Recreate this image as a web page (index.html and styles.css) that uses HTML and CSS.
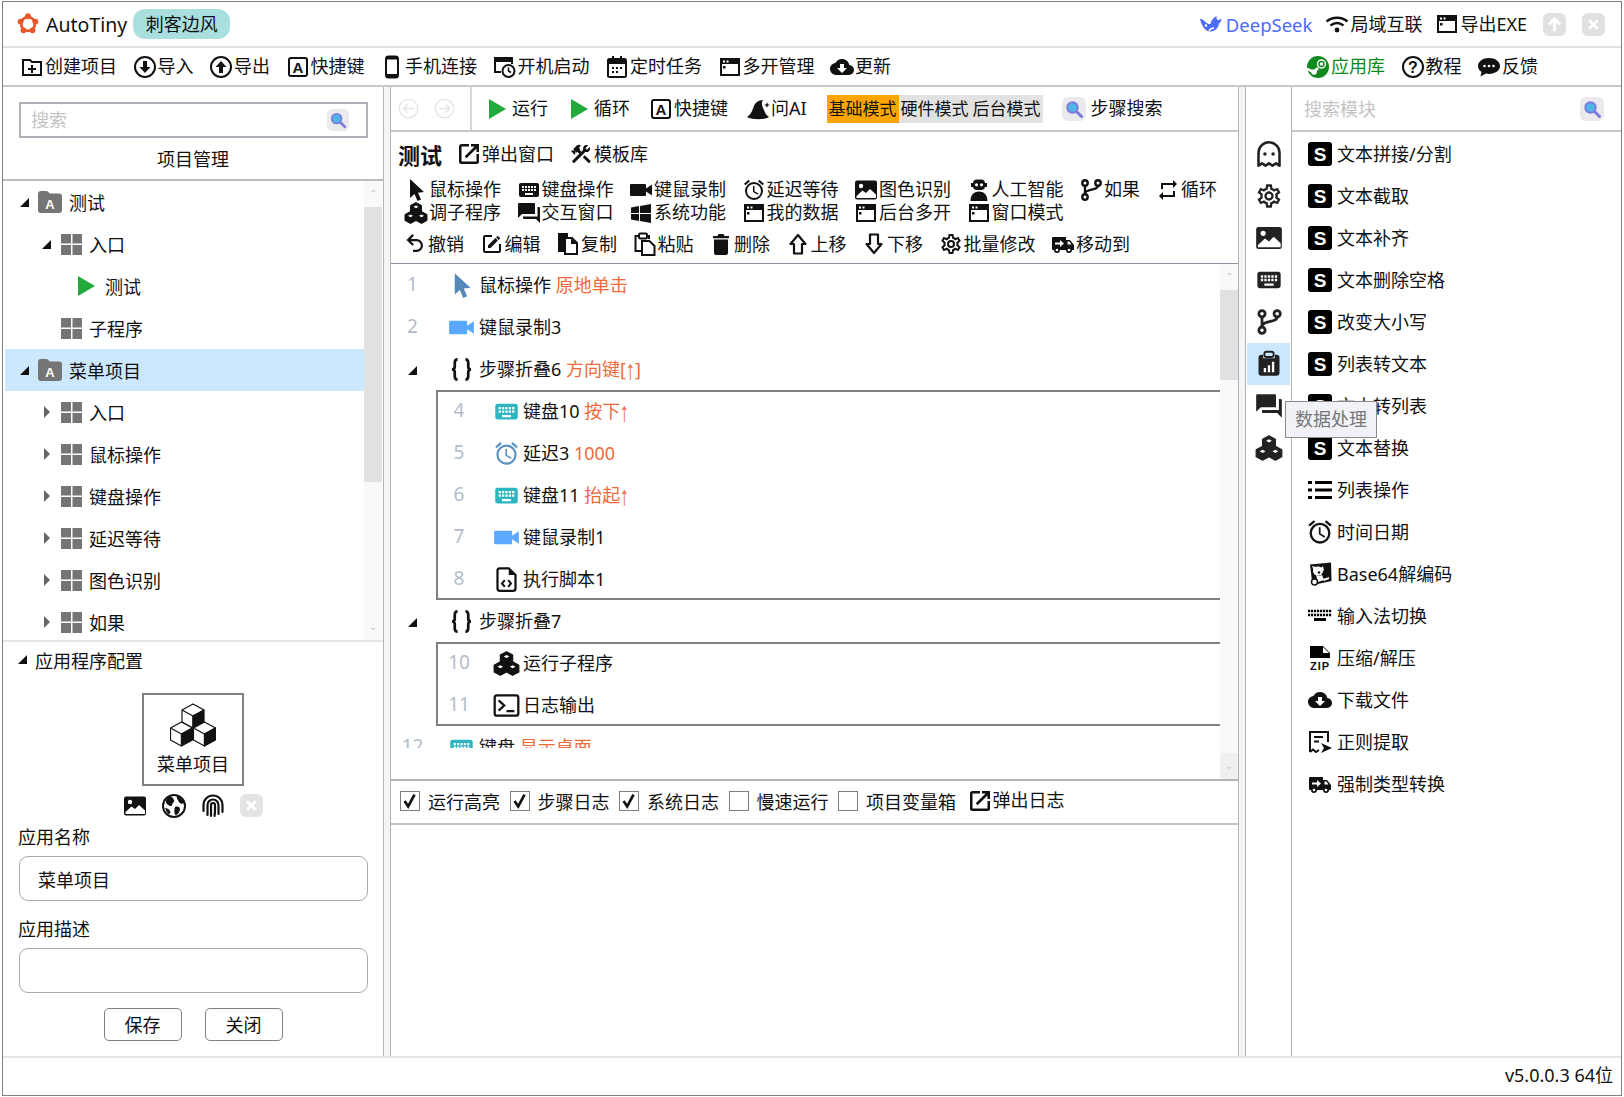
FILE: index.html
```html
<!DOCTYPE html>
<html lang="zh-CN">
<head>
  <meta charset="UTF-8">
  <title>AutoTiny</title>
  <link rel="stylesheet" href="styles.css">
</head>
<body>
  <svg class="sprite">
    <symbol id="logo" viewBox="0 0 24 24"><circle cx="12" cy="12" r="7.5" fill="none" stroke="#e8572a" stroke-width="3"/><g fill="#e8572a"><circle cx="12" cy="3.5" r="3.2"/><circle cx="20.1" cy="9.4" r="3.2"/><circle cx="17" cy="18.9" r="3.2"/><circle cx="7" cy="18.9" r="3.2"/><circle cx="3.9" cy="9.4" r="3.2"/></g></symbol>
    <symbol id="whale" viewBox="0 0 24 24"><path fill="#4d6bfe" d="M1 7c2-.5 4 1 5.500 3 1 1.500 3 2 5 2 .5-3 2-6 6-8 0 2 0 3 1 4 1 0 3-.5 4-1.500 0 2.500-1 4-2.500 5-.5 4-3.500 8-8.500 8C7 20 3 15 1 7z"/><circle cx="7" cy="13.500" r="1.300" fill="#fff"/><path fill="none" stroke="#fff" stroke-width="1.300" d="M10 19c1-2 3-3 5-3"/></symbol>
    <symbol id="wifi" viewBox="0 0 24 24"><path fill="none" stroke="currentColor" stroke-width="2.400" d="M1.5 9.5c6-5 15-5 21 0M5.5 13.5c4-3 9-3 13 0"/><circle cx="12" cy="18" r="2.4" fill="currentColor"/></symbol>
    <symbol id="win" viewBox="0 0 24 24"><rect x="3" y="4" width="18" height="16" fill="none" stroke="currentColor" stroke-width="2"/><rect x="3" y="4" width="18" height="5" fill="currentColor"/><rect x="5" y="11" width="2.5" height="2.5" fill="currentColor"/><rect x="5" y="5.5" width="2" height="2" fill="#fff"/><rect x="8.500" y="5.5" width="2" height="2" fill="#fff"/></symbol>
    <symbol id="folder-add" viewBox="0 0 24 24"><path fill="none" stroke="currentColor" stroke-width="2" d="M3 5h7l2 2h9v13H3z"/><path fill="currentColor" d="M11 10h2v3h3v2h-3v3h-2v-3H8v-2h3z"/></symbol>
    <symbol id="down" viewBox="0 0 24 24"><circle cx="12" cy="12" r="10" fill="none" stroke="currentColor" stroke-width="2"/><path fill="currentColor" d="M10 6h4v6h3.5L12 18l-5.500-6H10z"/></symbol>
    <symbol id="up" viewBox="0 0 24 24"><circle cx="12" cy="12" r="10" fill="none" stroke="currentColor" stroke-width="2"/><path fill="currentColor" d="M10 18h4v-6h3.500L12 6l-5.500 6H10z"/></symbol>
    <symbol id="key-a" viewBox="0 0 24 24"><rect x="3" y="3" width="18" height="18" rx="2" fill="none" stroke="currentColor" stroke-width="2"/><text x="12" y="17.500" text-anchor="middle" class="svg-bold" font-size="15">A</text></symbol>
    <symbol id="phone" viewBox="0 0 24 24"><rect x="6" y="1.500" width="12" height="21" rx="2.500" fill="none" stroke="currentColor" stroke-width="2"/><rect x="6" y="1.500" width="12" height="3" fill="currentColor"/><rect x="6" y="19" width="12" height="3" fill="currentColor"/></symbol>
    <symbol id="boot" viewBox="0 0 24 24"><path fill="none" stroke="currentColor" stroke-width="2" d="M8 17H2V3h17v6"/><rect x="2" y="3" width="17" height="4" fill="currentColor"/><circle cx="15.500" cy="16" r="6" fill="#fff" stroke="currentColor" stroke-width="2"/><path fill="none" stroke="currentColor" stroke-width="1.600" d="M15.500 12.500V16l2.500 1.500"/></symbol>
    <symbol id="calendar" viewBox="0 0 24 24"><rect x="3" y="4" width="18" height="18" rx="1.500" fill="none" stroke="currentColor" stroke-width="2"/><path fill="currentColor" d="M3 4h18v5H3zM7 1h2v4H7zM15 1h2v4h-2zM7 12h2v2H7zM11 12h2v2h-2zM15 12h2v2h-2zM7 16h2v2H7zM11 16h2v2h-2z"/></symbol>
    <symbol id="cloud" viewBox="0 0 24 24"><path fill="currentColor" d="M19.350 10.030C18.670 6.590 15.640 4 12 4 9.110 4 6.600 5.640 5.350 8.030 2.340 8.360 0 10.900 0 14a6 6 0 0 0 6 6h13a5 5 0 0 0 5-5c0-2.640-2.050-4.780-4.650-4.970z"/><path fill="#fff" d="M17 13l-5 5-5-5h3V9h4v4z"/></symbol>
    <symbol id="steam" viewBox="0 0 24 24"><circle cx="12" cy="12" r="11" fill="#0f8a1e"/><circle cx="15.500" cy="9" r="4" fill="none" stroke="#fff" stroke-width="1.500"/><circle cx="15.500" cy="9" r="1.800" fill="#fff"/><path fill="none" stroke="#fff" stroke-width="2.500" d="M1 14l7 3 4-4"/><circle cx="8" cy="17" r="2.800" fill="#fff"/></symbol>
    <symbol id="help" viewBox="0 0 24 24"><circle cx="12" cy="12" r="10" fill="none" stroke="currentColor" stroke-width="2"/><text x="12" y="18" text-anchor="middle" class="svg-bold" font-size="16">?</text></symbol>
    <symbol id="bubble" viewBox="0 0 24 24"><path fill="currentColor" d="M12 3C6 3 1 6.500 1 11c0 2.500 1.400 4.600 3.500 6l-1 4.500 5.500-3c1 .3 2 .4 3 .4 6 0 11-3.400 11-7.900S18 3 12 3z"/><g fill="#fff"><circle cx="7.500" cy="11" r="1.300"/><circle cx="12" cy="11" r="1.300"/><circle cx="16.500" cy="11" r="1.300"/></g></symbol>
    <symbol id="search" viewBox="0 0 24 24"><rect width="24" height="24" rx="6" fill="#e9e9ee"/><circle cx="10.500" cy="10.500" r="5.200" fill="#4db8e8" stroke="#7b7bdc" stroke-width="2"/><path stroke="#7b7bdc" stroke-width="3" stroke-linecap="round" d="M15 15l4.500 4.500"/></symbol>
    <symbol id="back" viewBox="0 0 24 24"><circle cx="12" cy="12" r="10.500" fill="none" stroke="#e4e4e4" stroke-width="1.500"/><path fill="none" stroke="#e4e4e4" stroke-width="1.500" d="M18 12H6M11 7l-5 5 5 5"/></symbol>
    <symbol id="forward" viewBox="0 0 24 24"><circle cx="12" cy="12" r="10.500" fill="none" stroke="#e4e4e4" stroke-width="1.500"/><path fill="none" stroke="#e4e4e4" stroke-width="1.500" d="M6 12h12M13 7l5 5-5 5"/></symbol>
    <symbol id="play" viewBox="0 0 17 20"><path fill="#22aa3c" d="M0 0l17 10L0 20z"/></symbol>
    <symbol id="hat" viewBox="0 0 24 24"><path fill="currentColor" d="M1 20c3-2 5-5 6.500-10C9 6 12 3 17 3c-2 3-1 6 1 10 1 3 2 5 5 7-4 3-17 3-22 0z"/><path fill="currentColor" d="M21 5l.8 2.200 2.200.8-2.200.8L21 11l-.8-2.200L18 8l2.200-.8z"/></symbol>
    <symbol id="popout" viewBox="0 0 24 24"><path fill="currentColor" d="M14 2v2.500h3.590l-9.830 9.830 1.830 1.830L19.500 6.410V10H22V2M19.500 19.500h-15v-15H12V2H4.500C3.110 2 2 3.100 2 4.500v15A2.500 2.500 0 0 0 4.500 22h15a2.500 2.500 0 0 0 2.500-2.500V12h-2.500z"/></symbol>
    <symbol id="tools" viewBox="0 0 24 24"><path fill="currentColor" d="M13.780 15.300l6 6 2.110-2.160-6-6-2.110 2.160M17.500 10.100c-.39 0-.81-.05-1.140-.19L4.970 21.250l-2.110-2.110 7.410-7.400-1.770-1.780-.72.7-1.450-1.410v2.860l-.7.700-3.520-3.560.7-.7h2.810L4.220 7.140l3.560-3.560c1.170-1.170 3.050-1.170 4.220 0L9.890 5.740l1.410 1.400-.71.710 1.790 1.780 1.820-1.880c-.14-.33-.2-.75-.2-1.120 0-1.970 1.560-3.520 3.500-3.520.59 0 1.110.14 1.580.42L16.410 6.200l1.500 1.500 2.670-2.670c.28.470.42.970.42 1.600 0 1.960-1.550 3.470-3.500 3.470z"/></symbol>
    <symbol id="cursor" viewBox="0 0 24 24"><path fill="currentColor" d="M6 1v19l4.500-4 3 7 3.500-1.500-3-6.800 6-.7z"/></symbol>
    <symbol id="keyboard" viewBox="0 0 24 24"><path fill="currentColor" fill-rule="evenodd" d="M20 5H4C2.890 5 2 5.890 2 7v10a2 2 0 0 0 2 2h16a2 2 0 0 0 2-2V7c0-1.110-.9-2-2-2zM5 8h2v2H5zM8 8h2v2H8zM11 8h2v2h-2zM14 8h2v2h-2zM17 8h2v2h-2zM5 11h2v2H5zM8 11h2v2H8zM11 11h2v2h-2zM14 11h2v2h-2zM17 11h2v2h-2zM8 15h8v2H8z"/></symbol>
    <symbol id="video" viewBox="0 0 24 24"><path fill="currentColor" d="M17 10.500V7a1 1 0 0 0-1-1H2a1 1 0 0 0-1 1v10a1 1 0 0 0 1 1h14a1 1 0 0 0 1-1v-3.500l6 4V6.500z"/></symbol>
    <symbol id="alarm" viewBox="0 0 24 24"><path fill="currentColor" d="M12 20a7 7 0 1 1 0-14 7 7 0 0 1 0 14m0-16a9 9 0 1 0 0 18 9 9 0 0 0 0-18m.5 4H11v6l4.750 2.850.75-1.230-4-2.370V8M7.880 3.390L6.600 1.860 2 5.710l1.290 1.530 4.590-3.850M22 5.720L17.400 1.860l-1.290 1.530 4.600 3.860L22 5.720z"/></symbol>
    <symbol id="image" viewBox="0 0 24 24"><rect x="1" y="2.500" width="22" height="19" rx="2" fill="currentColor"/><circle cx="7" cy="8" r="2.200" fill="#fff"/><path fill="#fff" d="M2.500 18l6-5.500 3.500 2.500 4-4 6 5.500V20h-19.500z"/></symbol>
    <symbol id="robot" viewBox="0 0 24 24"><rect x="6" y="1.500" width="12" height="10.500" rx="4" fill="currentColor"/><circle cx="9.500" cy="6.800" r="1.600" fill="#fff"/><circle cx="14.500" cy="6.800" r="1.600" fill="#fff"/><path fill="currentColor" d="M4 5h2v4H4zM18 5h2v4h-2zM3.500 23c0-5.500 3-9.500 8.500-9.500s8.500 4 8.500 9.500z"/></symbol>
    <symbol id="branch" viewBox="0 0 24 24"><g fill="none" stroke="currentColor" stroke-width="2.400"><circle cx="6" cy="5" r="2.700"/><circle cx="19" cy="5" r="2.700"/><circle cx="6" cy="19" r="2.700"/><path d="M6 7.700v8.600M19 7.700c0 5-13 3-13 8"/></g></symbol>
    <symbol id="repeat" viewBox="0 0 24 24"><path fill="currentColor" d="M17 17H7v-3l-4 4 4 4v-3h12v-6h-2M7 7h10v3l4-4-4-4v3H5v6h2z"/></symbol>
    <symbol id="blocks" viewBox="0 0 24 24"><path fill="currentColor" stroke="currentColor" stroke-linejoin="round" d="M12 1.500l5.500 3v6l-5.500 3-5.500-3v-6zM6.500 10.500l5.500 3v6l-5.500 3-5.500-3v-6zM17.500 10.500l5.500 3v6l-5.500 3-5.500-3v-6z"/><path fill="#fff" d="M12 4.500l2.500 1.300-2.500 1.400-2.500-1.400zM6.500 13.500l2.500 1.300-2.500 1.400-2.500-1.400zM17.500 13.500l2.500 1.300-2.500 1.400-2.500-1.400z"/></symbol>
    <symbol id="forum" viewBox="0 0 24 24"><path fill="currentColor" d="M22 6h-1.500v9.500H6V17a1 1 0 0 0 1 1h12l4 4V7a1 1 0 0 0-1-1zM18 13V3a1 1 0 0 0-1-1H2a1 1 0 0 0-1 1v14l4-4z"/></symbol>
    <symbol id="windows" viewBox="0 0 24 24"><path fill="currentColor" d="M2 12V6.400L10 5v7l-8 0zM22 3v9l-11 .0V4.900zM2 13h8v6.900l-8-1.400zM22 13v9l-11-2V13z"/></symbol>
    <symbol id="undo" viewBox="0 0 24 24"><path fill="currentColor" d="M13.500 7a6.500 6.500 0 0 1 0 13H10v-2.200h3.500a4.300 4.300 0 0 0 0-8.600H7.830l3.080 3.090-1.510 1.510L3.500 8l5.900-5.900 1.520 1.510L7.830 7h5.670z"/></symbol>
    <symbol id="edit" viewBox="0 0 24 24"><path fill="currentColor" d="M5 3C3.890 3 3 3.890 3 5v14a2 2 0 0 0 2 2h14a2 2 0 0 0 2-2v-7h-2v7H5V5h7V3H5m12.780 1c-.17 0-.35.070-.48.200l-1.220 1.210 2.500 2.500L19.800 6.700c.26-.26.260-.7 0-.95L18.250 4.200a.7.700 0 0 0-.47-.2m-2.410 2.120L8 13.500V16h2.500l7.370-7.380-2.500-2.500z"/></symbol>
    <symbol id="copy" viewBox="0 0 24 24"><path fill="currentColor" d="M2 1h10v4H8v15H2z"/><path fill="none" stroke="currentColor" stroke-width="2" d="M9 6h7l5 5v11H9z"/><path fill="currentColor" d="M15 6v6h6z"/></symbol>
    <symbol id="paste" viewBox="0 0 24 24"><g fill="none" stroke="currentColor" stroke-width="2"><path d="M6 4H2.500v15H8M13 4h3v3"/><rect x="6" y="1.500" width="8" height="5" rx="1.200"/><path d="M9 9h7.500l5 5v9H9z"/></g></symbol>
    <symbol id="trash" viewBox="0 0 24 24"><path fill="currentColor" d="M20 4h-4.500l-1-2h-5l-1 2H4v2.200h16zM5 21a2 2 0 0 0 2 2h10a2 2 0 0 0 2-2V7.500H5z"/></symbol>
    <symbol id="arrow-up" viewBox="0 0 24 24"><path fill="none" stroke="currentColor" stroke-width="2.200" stroke-linejoin="round" d="M12 3L19.500 12H16v9.500H8V12H4.500z"/></symbol>
    <symbol id="arrow-down" viewBox="0 0 24 24"><path fill="none" stroke="currentColor" stroke-width="2.200" stroke-linejoin="round" d="M12 21L19.500 12H16V2.500H8V12H4.500z"/></symbol>
    <symbol id="cog" viewBox="0 0 24 24"><path fill="currentColor" d="M12 8a4 4 0 1 1 0 8 4 4 0 0 1 0-8m0 2a2 2 0 1 0 0 4 2 2 0 0 0 0-4m-2 12c-.25 0-.46-.18-.5-.42l-.37-2.650c-.63-.25-1.170-.59-1.690-.99l-2.490 1.010c-.22.080-.49 0-.61-.22l-2-3.460a.5.500 0 0 1 .12-.64l2.110-1.660L4.500 12l.07-1-2.110-1.630a.5.500 0 0 1-.12-.64l2-3.460c.12-.22.39-.31.61-.22l2.490 1c.52-.39 1.060-.73 1.690-.98l.37-2.650c.04-.24.25-.42.5-.42h4c.25 0 .46.18.5.42l.37 2.650c.63.25 1.170.59 1.690.98l2.490-1c.22-.09.49 0 .61.220l2 3.460c.13.220.07.490-.12.640L19.430 11l.07 1-.07 1 2.110 1.630c.19.150.25.420.12.640l-2 3.460c-.12.220-.39.310-.61.220l-2.490-1c-.52.390-1.060.730-1.690.980l-.37 2.650c-.04.240-.25.420-.5.420h-4m1.250-18l-.37 2.610c-1.200.25-2.260.89-3.030 1.780L5.440 7.350l-.75 1.300L6.800 10.200c-.4 1.170-.4 2.440 0 3.600l-2.120 1.560.75 1.300 2.430-1.040c.77.880 1.820 1.520 3.010 1.760l.37 2.620h1.520l.37-2.610c1.190-.25 2.240-.89 3.010-1.770l2.430 1.040.75-1.300-2.120-1.550c.4-1.170.4-2.440 0-3.610l2.110-1.550-.75-1.300-2.410 1.040c-.77-.89-1.830-1.530-3.030-1.770L12.750 4h-1.500z"/></symbol>
    <symbol id="truck" viewBox="0 0 24 24"><path fill="currentColor" d="M1 6a1 1 0 0 1 1-1h13v3h4l4 5v5h-2a3 3 0 0 1-6 0H9a3 3 0 0 1-6 0H2a1 1 0 0 1-1-1z"/><path fill="#fff" d="M4 10.500h5V8l4 3.500L9 15v-2.500H4zM16.500 9.500h2l2 3h-4z"/><circle cx="6" cy="18" r="1.300" fill="#fff"/><circle cx="18" cy="18" r="1.300" fill="#fff"/></symbol>
    <symbol id="braces" viewBox="0 0 24 24"><path fill="none" stroke="currentColor" stroke-width="2.400" d="M8.500 3C6 3 6 4.500 6 6v3.500C6 11 5 12 3.500 12 5 12 6 13 6 14.500V18c0 1.500 0 3 2.500 3M15.500 3C18 3 18 4.500 18 6v3.500c0 1.500 1 2.500 2.500 2.500-1.500 0-2.500 1-2.500 2.500V18c0 1.500 0 3-2.500 3"/></symbol>
    <symbol id="file-code" viewBox="0 0 24 24"><path fill="none" stroke="currentColor" stroke-width="2" d="M6 2h8l6 6v12a2 2 0 0 1-2 2H6a2 2 0 0 1-2-2V4a2 2 0 0 1 2-2z"/><path fill="currentColor" d="M14 2v6h6z"/><path fill="none" stroke="currentColor" stroke-width="1.800" d="M10.500 12.500L8 15.500l2.500 3M13.500 12.500l2.500 3-2.500 3"/></symbol>
    <symbol id="terminal" viewBox="0 0 24 24"><rect x="1.500" y="3" width="21" height="18" rx="2" fill="none" stroke="currentColor" stroke-width="2"/><path fill="none" stroke="currentColor" stroke-width="2" d="M5 7.500l5 4.500-5 4.500M12 17h7"/></symbol>
    <symbol id="grid" viewBox="0 0 21 21"><path fill="#757575" d="M0 0h10v9.500H0zM11.500 0H21v9.500h-9.500zM0 11h10v10H0zM11.500 11H21v10h-9.500z"/></symbol>
    <symbol id="folder-a" viewBox="0 0 24 22"><path fill="#757575" d="M3 0h6l3 2.500h9a3 3 0 0 1 3 3V19a3 3 0 0 1-3 3H3a3 3 0 0 1-3-3V3a3 3 0 0 1 3-3z"/><text x="12" y="18" text-anchor="middle" class="svg-bold" font-size="13" style="fill:#fff">A</text></symbol>
    <symbol id="cubes" viewBox="0 0 46 44"><g stroke="#111" stroke-width="1.200" stroke-linejoin="round"><path fill="#fff" d="M23 1l11 6-11 6-11-6zM12 7l11 6v12l-11-6z"/><path fill="#111" d="M34 7v12l-11 6V13z"/><path fill="#fff" d="M11.500 19l11 6-11 6-11-6zM.5 25l11 6v12l-11-6z"/><path fill="#111" d="M22.500 25v12l-11 6V31z"/><path fill="#fff" d="M34.500 19l11 6-11 6-11-6zM23.500 25l11 6v12l-11-6z"/><path fill="#111" d="M45.500 25v12l-11 6V31z"/></g></symbol>
    <symbol id="globe" viewBox="0 0 24 24"><circle cx="12" cy="12" r="11" fill="#fff" stroke="#111" stroke-width="2"/><path fill="#111" d="M7 3c3-1 4 1 5 3s-2 3-2 5-3 1-5-1-1-5 2-7zM13 13c3-1 5 0 5 2s-2 6-4 6-2-6-1-8zM15 2c3 1 6 4 7 7-2 1-4 1-5-1s-3-4-2-6zM3 14c2 0 4 1 5 3s0 3-1 3-3-3-4-6z"/></symbol>
    <symbol id="finger" viewBox="0 0 24 24"><g fill="none" stroke="#111" stroke-width="2.200" stroke-linecap="round"><path d="M2.500 17V11a9.500 9.500 0 0 1 19 0v7"/><path d="M6.500 21V11a5.500 5.500 0 0 1 11 0v9"/><path d="M10 22v-11a2 2 0 0 1 4 0v5c0 2 0 4-.5 6"/></g></symbol>
    <symbol id="ghost" viewBox="0 0 24 24"><path fill="none" stroke="#222" stroke-width="2.200" stroke-linejoin="round" d="M12 2a9 9 0 0 0-9 9v11l3-2 3 2 3-2 3 2 3-2 3 2V11a9 9 0 0 0-9-9z"/><circle cx="8.500" cy="12" r="1.500" fill="#222"/><circle cx="15.500" cy="12" r="1.500" fill="#222"/></symbol>
    <symbol id="clip-chart" viewBox="0 0 24 24"><path fill="#222" d="M7 4H5.500A2.500 2.500 0 0 0 3 6.500v13A2.500 2.500 0 0 0 5.500 22h13a2.500 2.500 0 0 0 2.500-2.500v-13A2.500 2.500 0 0 0 18.500 4H17v3H7z"/><rect x="8" y="1.500" width="8" height="4.500" rx="2" fill="none" stroke="#222" stroke-width="1.600"/><path fill="#fff" d="M7.500 15.500h2V19h-2zM11 13h2v6h-2zM14.500 10h2v9h-2z"/></symbol>
    <symbol id="s-box" viewBox="0 0 24 24"><rect width="24" height="24" rx="3" fill="#000"/><text x="12" y="19" text-anchor="middle" class="svg-bold" font-size="19" style="fill:#fff">S</text></symbol>
    <symbol id="list" viewBox="0 0 24 24"><path fill="#000" d="M0 3h4v3H0zM7 3h17v3H7zM0 10.500h4v3H0zM7 10.500h17v3H7zM0 18h4v3H0zM7 18h17v3H7z"/></symbol>
    <symbol id="dog" viewBox="0 0 24 24"><path fill="#111" d="M2 2.500L23 .5l.5 18.500-14 3-5 1z"/><ellipse cx="10" cy="9" rx="5" ry="4.500" fill="#fff"/><path fill="#fff" d="M4 4l4 1-2 4zM15 4l1 5-4-2zM8 13c2 1 4 1 6 0l2 5-6 2zM15 17l6-2v2l-5 2z"/><circle cx="11" cy="10.500" r="1.300" fill="#111"/><circle cx="6.500" cy="20" r="3" fill="#fff" stroke="#111" stroke-width="1.500"/></symbol>
    <symbol id="kbd-flat" viewBox="0 0 24 24"><g stroke="#000" stroke-width="2.600" fill="none"><path stroke-dasharray="2.200 .8" d="M0 7h24M0 11h24"/></g><rect x="6" y="14" width="12" height="3" fill="#000"/></symbol>
    <symbol id="zip" viewBox="0 0 24 24"><path fill="#000" d="M2 0h13l7 7v5H2z"/><path fill="#fff" d="M15 1v6h6z"/><text x="12" y="23.500" text-anchor="middle" class="svg-bold" font-size="11" letter-spacing="1">ZIP</text></symbol>
    <symbol id="regex" viewBox="0 0 24 24"><path fill="none" stroke="#111" stroke-width="2" d="M2 22V2h18v10M2 22l3-2.500 3 2.500 3-2"/><path fill="#111" d="M6 6h9v2H6zM6 10.500h5v2H6zM13 13l11 5-11 5 3-5z"/></symbol>
    <symbol id="caret-open" viewBox="0 0 9 9"><path fill="#111" d="M0 9L9 0v9z"/></symbol>
    <symbol id="caret-shut" viewBox="0 0 9 14"><path fill="#666" d="M2 1l6 6-6 6z"/></symbol>
    <symbol id="tick" viewBox="0 0 20 20"><path fill="none" stroke="#111" stroke-width="3" d="M4 10l4 6L15 3"/></symbol>
    <symbol id="x-mark" viewBox="0 0 24 24"><path stroke="#fff" stroke-width="3" d="M7.500 7.500l9 9M16.500 7.500l-9 9"/></symbol>
    <symbol id="up-mark" viewBox="0 0 24 24"><path fill="none" stroke="#fff" stroke-width="3" d="M12 19V6M6 12l6-6 6 6"/></symbol>
  </svg>

  <div class="window">
    <div class="titlebar">
      <svg class="logo"><use href="#logo"/></svg>
      <span class="app-name">AutoTiny</span>
      <span class="badge">刺客边风</span>
      <div class="spacer"></div>
      <span class="tool deepseek"><svg class="ic-24"><use href="#whale"/></svg>DeepSeek</span>
      <span class="tool"><svg class="ic"><use href="#wifi"/></svg>局域互联</span>
      <span class="tool"><svg class="ic"><use href="#win"/></svg>导出EXE</span>
      <span class="grey-btn"><svg class="ic-full"><use href="#up-mark"/></svg></span>
      <span class="grey-btn"><svg class="ic-full"><use href="#x-mark"/></svg></span>
    </div>

    <div class="toolbar">
      <span class="tool"><svg class="ic"><use href="#folder-add"/></svg>创建项目</span>
      <span class="tool"><svg class="ic"><use href="#down"/></svg>导入</span>
      <span class="tool"><svg class="ic"><use href="#up"/></svg>导出</span>
      <span class="tool"><svg class="ic"><use href="#key-a"/></svg>快捷键</span>
      <span class="tool"><svg class="ic"><use href="#phone"/></svg>手机连接</span>
      <span class="tool"><svg class="ic"><use href="#boot"/></svg>开机启动</span>
      <span class="tool"><svg class="ic"><use href="#calendar"/></svg>定时任务</span>
      <span class="tool"><svg class="ic"><use href="#win"/></svg>多开管理</span>
      <span class="tool"><svg class="ic"><use href="#cloud"/></svg>更新</span>
      <div class="spacer"></div>
      <span class="tool store"><svg class="ic"><use href="#steam"/></svg>应用库</span>
      <span class="tool"><svg class="ic"><use href="#help"/></svg>教程</span>
      <span class="tool"><svg class="ic"><use href="#bubble"/></svg>反馈</span>
    </div>

    <div class="main">
      <!-- project tree and app settings -->
      <div class="left">
        <div class="search-box">
          <input type="text" placeholder="搜索">
          <svg class="search-ic"><use href="#search"/></svg>
        </div>
        <div class="left-title">项目管理</div>
        <div class="tree-wrap">
          <div class="tree">
            <div class="node lv1"><svg class="caret"><use href="#caret-open"/></svg><svg class="node-folder"><use href="#folder-a"/></svg><span>测试</span></div>
            <div class="node lv2"><svg class="caret"><use href="#caret-open"/></svg><svg class="node-grid"><use href="#grid"/></svg><span>入口</span></div>
            <div class="node lv3"><svg class="node-play"><use href="#play"/></svg><span>测试</span></div>
            <div class="node lv2"><span class="caret"></span><svg class="node-grid"><use href="#grid"/></svg><span>子程序</span></div>
            <div class="node lv1 selected"><svg class="caret"><use href="#caret-open"/></svg><svg class="node-folder"><use href="#folder-a"/></svg><span>菜单项目</span></div>
            <div class="node lv2"><svg class="caret shut"><use href="#caret-shut"/></svg><svg class="node-grid"><use href="#grid"/></svg><span>入口</span></div>
            <div class="node lv2"><svg class="caret shut"><use href="#caret-shut"/></svg><svg class="node-grid"><use href="#grid"/></svg><span>鼠标操作</span></div>
            <div class="node lv2"><svg class="caret shut"><use href="#caret-shut"/></svg><svg class="node-grid"><use href="#grid"/></svg><span>键盘操作</span></div>
            <div class="node lv2"><svg class="caret shut"><use href="#caret-shut"/></svg><svg class="node-grid"><use href="#grid"/></svg><span>延迟等待</span></div>
            <div class="node lv2"><svg class="caret shut"><use href="#caret-shut"/></svg><svg class="node-grid"><use href="#grid"/></svg><span>图色识别</span></div>
            <div class="node lv2"><svg class="caret shut"><use href="#caret-shut"/></svg><svg class="node-grid"><use href="#grid"/></svg><span>如果</span></div>
          </div>
          <div class="scrollbar tree-bar">
            <div class="sb-btn">&#8963;</div>
            <div class="sb-thumb"></div>
            <div class="sb-track"></div>
            <div class="sb-btn">&#8964;</div>
          </div>
        </div>

        <div class="config">
          <div class="config-head"><svg class="caret"><use href="#caret-open"/></svg>应用程序配置</div>
          <div class="app-card">
            <svg class="app-cubes"><use href="#cubes"/></svg>
            <span>菜单项目</span>
          </div>
          <div class="app-actions">
            <svg class="ic-24"><use href="#image"/></svg>
            <svg class="ic-24"><use href="#globe"/></svg>
            <svg class="ic-24"><use href="#finger"/></svg>
            <span class="grey-btn"><svg class="ic-full"><use href="#x-mark"/></svg></span>
          </div>
          <div class="field-label">应用名称</div>
          <input class="field" type="text" value="菜单项目">
          <div class="field-label second">应用描述</div>
          <textarea class="field area"></textarea>
          <div class="form-btns">
            <button>保存</button>
            <button>关闭</button>
          </div>
        </div>
      </div>

      <div class="split"></div>

      <!-- step editor -->
      <div class="center">
        <div class="run-bar">
          <div class="nav-arrows">
            <svg class="ic-nav"><use href="#back"/></svg>
            <svg class="ic-nav"><use href="#forward"/></svg>
          </div>
          <div class="run-tools">
            <span class="tool run"><svg class="ic-play"><use href="#play"/></svg>运行</span>
            <span class="tool run"><svg class="ic-play"><use href="#play"/></svg>循环</span>
            <span class="tool"><svg class="ic"><use href="#key-a"/></svg>快捷键</span>
            <span class="tool"><svg class="ic"><use href="#hat"/></svg>问AI</span>
            <div class="modes">
              <span class="mode active">基础模式</span><span class="mode">硬件模式</span><span class="mode">后台模式</span>
            </div>
            <span class="tool step-search"><svg class="ic-24"><use href="#search"/></svg>步骤搜索</span>
          </div>
        </div>

        <div class="modules">
          <div class="head-row">
            <strong>测试</strong>
            <span class="tool"><svg class="ic"><use href="#popout"/></svg>弹出窗口</span>
            <span class="tool"><svg class="ic"><use href="#tools"/></svg>模板库</span>
          </div>
          <div class="module-grid">
            <span class="tool"><svg class="ic"><use href="#cursor"/></svg>鼠标操作</span>
            <span class="tool"><svg class="ic"><use href="#keyboard"/></svg>键盘操作</span>
            <span class="tool"><svg class="ic"><use href="#video"/></svg>键鼠录制</span>
            <span class="tool"><svg class="ic"><use href="#alarm"/></svg>延迟等待</span>
            <span class="tool"><svg class="ic"><use href="#image"/></svg>图色识别</span>
            <span class="tool"><svg class="ic"><use href="#robot"/></svg>人工智能</span>
            <span class="tool"><svg class="ic"><use href="#branch"/></svg>如果</span>
            <span class="tool"><svg class="ic"><use href="#repeat"/></svg>循环</span>
            <span class="tool"><svg class="ic"><use href="#blocks"/></svg>调子程序</span>
            <span class="tool"><svg class="ic"><use href="#forum"/></svg>交互窗口</span>
            <span class="tool"><svg class="ic"><use href="#windows"/></svg>系统功能</span>
            <span class="tool"><svg class="ic"><use href="#win"/></svg>我的数据</span>
            <span class="tool"><svg class="ic"><use href="#win"/></svg>后台多开</span>
            <span class="tool"><svg class="ic"><use href="#win"/></svg>窗口模式</span>
          </div>
          <div class="edit-row">
            <span class="tool"><svg class="ic"><use href="#undo"/></svg>撤销</span>
            <span class="tool"><svg class="ic"><use href="#edit"/></svg>编辑</span>
            <span class="tool"><svg class="ic"><use href="#copy"/></svg>复制</span>
            <span class="tool"><svg class="ic"><use href="#paste"/></svg>粘贴</span>
            <span class="tool"><svg class="ic"><use href="#trash"/></svg>删除</span>
            <span class="tool"><svg class="ic"><use href="#arrow-up"/></svg>上移</span>
            <span class="tool"><svg class="ic"><use href="#arrow-down"/></svg>下移</span>
            <span class="tool"><svg class="ic"><use href="#cog"/></svg>批量修改</span>
            <span class="tool"><svg class="ic"><use href="#truck"/></svg>移动到</span>
          </div>
        </div>

        <div class="steps-wrap">
          <div class="steps">
            <div class="step"><span class="num">1</span><svg class="step-ic c-steel"><use href="#cursor"/></svg><span class="step-txt">鼠标操作 <em>原地单击</em></span></div>
            <div class="step"><span class="num">2</span><svg class="step-ic c-blue"><use href="#video"/></svg><span class="step-txt">键鼠录制3</span></div>
            <div class="step"><span class="num"><svg class="fold"><use href="#caret-open"/></svg></span><svg class="step-ic"><use href="#braces"/></svg><span class="step-txt">步骤折叠6 <em>方向键[<span class="arr">↑</span>]</em></span></div>
            <div class="frame">
              <div class="step"><span class="num">4</span><svg class="step-ic c-teal"><use href="#keyboard"/></svg><span class="step-txt">键盘10 <em>按下<span class="arr">↑</span></em></span></div>
              <div class="step"><span class="num">5</span><svg class="step-ic c-clock"><use href="#alarm"/></svg><span class="step-txt">延迟3 <em>1000</em></span></div>
              <div class="step"><span class="num">6</span><svg class="step-ic c-teal"><use href="#keyboard"/></svg><span class="step-txt">键盘11 <em>抬起<span class="arr">↑</span></em></span></div>
              <div class="step"><span class="num">7</span><svg class="step-ic c-blue"><use href="#video"/></svg><span class="step-txt">键鼠录制1</span></div>
              <div class="step"><span class="num">8</span><svg class="step-ic"><use href="#file-code"/></svg><span class="step-txt">执行脚本1</span></div>
            </div>
            <div class="step"><span class="num"><svg class="fold"><use href="#caret-open"/></svg></span><svg class="step-ic"><use href="#braces"/></svg><span class="step-txt">步骤折叠7</span></div>
            <div class="frame">
              <div class="step"><span class="num">10</span><svg class="step-ic"><use href="#blocks"/></svg><span class="step-txt">运行子程序</span></div>
              <div class="step"><span class="num">11</span><svg class="step-ic"><use href="#terminal"/></svg><span class="step-txt">日志输出</span></div>
            </div>
            <div class="step"><span class="num">12</span><svg class="step-ic c-teal"><use href="#keyboard"/></svg><span class="step-txt">键盘 <em>显示桌面</em></span></div>
          </div>
          <div class="scrollbar step-bar">
            <div class="sb-btn">&#8963;</div>
            <div class="sb-thumb"></div>
            <div class="sb-track"></div>
            <div class="sb-btn dark">&#8964;</div>
          </div>
        </div>

        <div class="checks">
          <label class="chk"><span class="box"><svg><use href="#tick"/></svg></span>运行高亮</label>
          <label class="chk"><span class="box"><svg><use href="#tick"/></svg></span>步骤日志</label>
          <label class="chk"><span class="box"><svg><use href="#tick"/></svg></span>系统日志</label>
          <label class="chk"><span class="box"></span>慢速运行</label>
          <label class="chk"><span class="box"></span>项目变量箱</label>
          <span class="tool"><svg class="ic"><use href="#popout"/></svg>弹出日志</span>
        </div>
        <div class="log"></div>
      </div>

      <div class="split"></div>

      <!-- module categories -->
      <div class="cats">
        <div class="cat"><svg><use href="#ghost"/></svg></div>
        <div class="cat c-dark"><svg><use href="#cog"/></svg></div>
        <div class="cat c-dark"><svg><use href="#image"/></svg></div>
        <div class="cat c-dark"><svg><use href="#keyboard"/></svg></div>
        <div class="cat c-dark"><svg><use href="#branch"/></svg></div>
        <div class="cat active"><svg><use href="#clip-chart"/></svg></div>
        <div class="cat c-dark"><svg><use href="#forum"/></svg></div>
        <div class="cat c-dark"><svg><use href="#blocks"/></svg></div>
      </div>

      <div class="right">
        <div class="right-search">
          <input type="text" placeholder="搜索模块">
          <svg class="search-ic"><use href="#search"/></svg>
        </div>
        <div class="mod-list">
          <div class="mod"><svg><use href="#s-box"/></svg>文本拼接/分割</div>
          <div class="mod"><svg><use href="#s-box"/></svg>文本截取</div>
          <div class="mod"><svg><use href="#s-box"/></svg>文本补齐</div>
          <div class="mod"><svg><use href="#s-box"/></svg>文本删除空格</div>
          <div class="mod"><svg><use href="#s-box"/></svg>改变大小写</div>
          <div class="mod"><svg><use href="#s-box"/></svg>列表转文本</div>
          <div class="mod"><svg><use href="#s-box"/></svg>文本转列表</div>
          <div class="mod"><svg><use href="#s-box"/></svg>文本替换</div>
          <div class="mod"><svg><use href="#list"/></svg>列表操作</div>
          <div class="mod"><svg class="big"><use href="#alarm"/></svg>时间日期</div>
          <div class="mod"><svg><use href="#dog"/></svg>Base64解编码</div>
          <div class="mod"><svg><use href="#kbd-flat"/></svg>输入法切换</div>
          <div class="mod"><svg><use href="#zip"/></svg>压缩/解压</div>
          <div class="mod"><svg><use href="#cloud"/></svg>下载文件</div>
          <div class="mod"><svg><use href="#regex"/></svg>正则提取</div>
          <div class="mod"><svg><use href="#truck"/></svg>强制类型转换</div>
        </div>
      </div>
    </div>

    <div class="statusbar">v5.0.0.3 64位</div>

    <div class="tooltip">数据处理</div>
  </div>
</body>
</html>
```

FILE: styles.css
```css
* {
  box-sizing: border-box;
}
html, body {
  margin: 0;
  padding: 0;
  background: #fff;
}
body {
  font-family: "Noto Sans", "Noto Sans CJK SC", sans-serif;
  font-size: 18px;
  color: #111;
}
.sprite {
  display: none;
}
.svg-bold {
  font-family: "Liberation Sans", sans-serif;
  font-weight: bold;
  fill: currentColor;
}
.window {
  position: relative;
  width: 1620px;
  height: 1095px;
  margin: 1px 0 0 2px;
  border: 1px solid #808080;
  display: flex;
  flex-direction: column;
  overflow: hidden;
}
.spacer {
  flex: 1;
}

/* shared icon + label */
.tool {
  display: flex;
  align-items: center;
  gap: 3px;
  white-space: nowrap;
  line-height: 23px;
}
.ic {
  width: 24px;
  height: 24px;
  margin: -2px;
  flex: none;
}
.ic-24 {
  width: 24px;
  height: 24px;
  flex: none;
}
.ic-full {
  width: 100%;
  height: 100%;
  display: block;
}
.grey-btn {
  width: 23px;
  height: 23px;
  border-radius: 6px;
  background: #e1e1e1;
  flex: none;
}

/* title bar */
.titlebar {
  height: 46px;
  flex: none;
  display: flex;
  align-items: center;
  padding: 0 16px 0 14px;
  border-bottom: 2px solid #e2e2e2;
}
.logo {
  width: 22px;
  height: 22px;
}
.app-name {
  font-size: 19.5px;
  margin-left: 7px;
}
.badge {
  margin-left: 6px;
  height: 30px;
  width: 97px;
  line-height: 30px;
  text-align: center;
  background: #aadfe0;
  border-radius: 12px;
}
.deepseek {
  color: #4d6bfe;
  font-size: 18.500px;
  margin-right: 15px;
}
.titlebar .tool + .tool {
  margin-right: 15px;
}
.titlebar .grey-btn {
  margin-left: 16px;
}
.titlebar .tool + .tool + .tool {
  margin-right: 0;
}

.toolbar {
  height: 39px;
  flex: none;
  display: flex;
  align-items: center;
  gap: 17.500px;
  padding: 0 83px 0 19px;
  border-bottom: 2px solid #c8c8c8;
}
.store {
  color: #0a8a1a;
}

.main {
  flex: 1;
  min-height: 0;
  display: flex;
}
.split {
  width: 6px;
  flex: none;
  background: #f5f5f5;
}

/* left panel */
.left {
  width: 381px;
  flex: none;
  display: flex;
  flex-direction: column;
  border-right: 1px solid #b4b4b4;
}
.search-box {
  height: 36px;
  margin: 15px 15px 0 16px;
  border: 2px solid #b0b0b8;
  display: flex;
  align-items: center;
  padding: 0 17px 0 10px;
  flex: none;
}
.search-box input, .right-search input {
  flex: 1;
  min-width: 0;
  border: none;
  outline: none;
  padding: 0;
  font: inherit;
}
input::placeholder {
  color: #c4c4c4;
  opacity: 1;
}
.search-ic {
  width: 22px;
  height: 22px;
  flex: none;
}
.left-title {
  height: 43px;
  line-height: 43px;
  text-align: center;
  border-bottom: 2px solid #bdbdbd;
  flex: none;
}
.tree-wrap {
  height: 461px;
  flex: none;
  display: flex;
  padding: 0 1px 0 2px;
  border-bottom: 2px solid #e5e5e5;
}
.tree {
  flex: 1;
  min-width: 0;
  overflow: hidden;
}
.node {
  height: 42px;
  display: flex;
  align-items: center;
}
.node.selected {
  background: #cce8ff;
}
.lv1 {
  padding-left: 15px;
}
.lv2 {
  padding-left: 37px;
}
.lv3 {
  padding-left: 73px;
}
.caret {
  width: 9px;
  height: 9px;
  flex: none;
  display: inline-block;
}
.caret.shut {
  height: 14px;
}
.node-folder {
  width: 24px;
  height: 22px;
  margin-left: 9px;
  flex: none;
}
.node-grid {
  width: 21px;
  height: 21px;
  margin-left: 10px;
  flex: none;
}
.node-play {
  width: 17px;
  height: 20px;
  flex: none;
}
.node span:last-child {
  margin-left: 7px;
}
.lv3 span:last-child {
  margin-left: 10px;
}

.scrollbar {
  width: 18px;
  flex: none;
  display: flex;
  flex-direction: column;
  background: #f9f9f9;
}
.sb-btn {
  height: 26px;
  flex: none;
  font-size: 10px;
  line-height: 24px;
  text-align: center;
  color: #c8c8c8;
}
.sb-btn.dark {
  background: #f0f0f0;
}
.sb-thumb {
  background: #e1e1e1;
  flex: none;
}
.tree-bar .sb-thumb {
  height: 275px;
}
.step-bar .sb-thumb {
  height: 90px;
}
.sb-track {
  flex: 1;
}

.config {
  flex: 1;
  min-height: 0;
}
.config-head {
  height: 35px;
  display: flex;
  align-items: center;
  padding-left: 15px;
  gap: 8px;
}
.app-card {
  width: 102px;
  height: 93px;
  margin: 16px auto 0;
  border: 2px solid #808080;
  display: flex;
  flex-direction: column;
  align-items: center;
  padding-top: 8px;
}
.app-cubes {
  width: 46px;
  height: 44px;
}
.app-card span {
  line-height: 24px;
  margin-top: 5px;
}
.app-actions {
  display: flex;
  justify-content: center;
  gap: 15px;
  margin-top: 8px;
}
.app-actions .grey-btn {
  background: #e4e4e4;
}
.field-label {
  margin: 7px 0 0 15px;
  line-height: 24px;
}
.field-label.second {
  margin-top: 16px;
}
.field {
  display: block;
  width: 349px;
  height: 45px;
  margin: 7px 0 0 16px;
  padding: 0 18px;
  border: 1.5px solid #a9a9b0;
  border-radius: 9px;
  font: inherit;
  color: inherit;
  outline: none;
  resize: none;
}
.field.area {
  margin-top: 7px;
}
.form-btns {
  display: flex;
  justify-content: center;
  gap: 23px;
  margin-top: 15px;
}
.form-btns button {
  width: 78px;
  height: 33px;
  padding: 0 0 2px;
  background: #fff;
  border: 1.5px solid #808080;
  border-radius: 5px;
  font: inherit;
  color: inherit;
}

/* center panel */
.center {
  width: 849px;
  flex: none;
  display: flex;
  flex-direction: column;
  border-left: 1px solid #b4b4b4;
  border-right: 1px solid #b4b4b4;
}
.run-bar {
  height: 45px;
  flex: none;
  display: flex;
  border-bottom: 2px solid #c8c8c8;
}
.nav-arrows {
  width: 81px;
  flex: none;
  display: flex;
  align-items: center;
  gap: 15px;
  padding-left: 7px;
  border-right: 2px solid #d8d8d8;
}
.ic-nav {
  width: 21px;
  height: 21px;
}
.run-tools {
  flex: 1;
  display: flex;
  align-items: center;
  padding-left: 17px;
  gap: 20px;
}
.run {
  gap: 6px;
}
.run + .run {
  margin: 0 1px 0 3px;
}
.ic-play {
  width: 17px;
  height: 20px;
}
.modes {
  display: flex;
  margin-right: -1px;
}
.mode {
  width: 72px;
  height: 28px;
  line-height: 27px;
  font-size: 17px;
  text-align: center;
  background: #e2e2e2;
}
.mode.active {
  background: #ffa500;
}
.step-search {
  gap: 5px;
}
.modules {
  height: 132px;
  flex: none;
  border-bottom: 1px solid #8a94a0;
}
.head-row {
  height: 46px;
  display: flex;
  align-items: center;
  padding: 0 0 2px 7px;
  gap: 17px;
}
.head-row strong {
  font-size: 22px;
}
.module-grid {
  display: grid;
  grid-template-columns: repeat(6, 112.5px) 77px auto;
  grid-auto-rows: 23px;
  padding-left: 15px;
}
.edit-row {
  display: flex;
  gap: 17.500px;
  height: 36px;
  margin-top: 2px;
  padding-left: 14px;
  align-items: center;
}
.steps-wrap {
  height: 517px;
  flex: none;
  display: flex;
  border-bottom: 2px solid #b4b4b4;
}
.steps {
  flex: 1;
  min-width: 0;
  height: 484px;
  overflow: hidden;
}
.step {
  height: 42px;
  display: flex;
  align-items: center;
  padding-bottom: 2px;
  white-space: nowrap;
}
.num {
  width: 43px;
  flex: none;
  text-align: center;
  color: #b4bccb;
  font-size: 19px;
}
.fold {
  width: 9px;
  height: 9px;
  display: inline-block;
}
.step-ic {
  width: 27px;
  height: 27px;
  margin: 0 4px -2px 14px;
  flex: none;
}
.step-txt em {
  font-style: normal;
  color: #ee6a3a;
}
.arr {
  display: inline-block;
  font-family: "Liberation Sans", sans-serif;
  transform: scale(1.1, 1.5);
}
.c-steel {
  color: #5588b8;
}
.c-blue {
  color: #5aa9ff;
}
.c-teal {
  color: #2fb5c0;
}
.c-clock {
  color: #5a93c4;
}
.frame {
  margin-left: 45px;
  box-shadow: inset 2px 0 #808080, inset 0 2px #808080, inset 0 -2px #808080;
}
.frame .num {
  width: 46px;
}
.frame .step-ic {
  margin-left: 11px;
  margin-right: 3px;
}
.checks {
  height: 44px;
  flex: none;
  display: flex;
  align-items: center;
  padding: 0 0 3px 9px;
  border-bottom: 2px solid #c0c0c4;
}
.chk {
  display: flex;
  align-items: center;
  gap: 8px;
  margin-right: 9.500px;
}
.box {
  width: 20px;
  height: 20px;
  flex: none;
  border: 1.5px solid #808080;
  display: flex;
  align-items: center;
  justify-content: center;
}
.box svg {
  width: 18px;
  height: 18px;
}
.checks .tool {
  margin-left: 4px;
}
.log {
  flex: 1;
}

/* category icons */
.cats {
  width: 47px;
  flex: none;
  padding-top: 46px;
  border-left: 1px solid #b4b4b4;
  border-right: 1px solid #b4b4b4;
}
.cat {
  height: 42px;
  margin: 0 1px;
  display: flex;
  align-items: center;
  justify-content: center;
}
.cat svg {
  width: 28px;
  height: 28px;
}
.cat.active {
  background: #cce8ff;
}
.c-dark {
  color: #222;
}

/* module list */
.right {
  flex: 1;
  min-width: 0;
}
.right-search {
  height: 45px;
  display: flex;
  align-items: center;
  padding: 0 17px 0 12px;
  border-bottom: 2px solid #c8c8c8;
}
.right-search .search-ic {
  width: 24px;
  height: 24px;
}
.mod-list {
  padding: 1px 0 0 16px;
}
.mod {
  height: 42px;
  display: flex;
  align-items: center;
  gap: 5px;
  padding-bottom: 2px;
}
.mod svg {
  width: 24px;
  height: 24px;
  margin-bottom: -2px;
  flex: none;
}
.mod svg.big {
  width: 28px;
  height: 28px;
  margin: 0 -2px -2px;
}

.statusbar {
  height: 39px;
  flex: none;
  border-top: 2px solid #e5e5e5;
  text-align: right;
  line-height: 35px;
  padding-right: 8px;
}

.tooltip {
  position: absolute;
  left: 1282px;
  top: 399px;
  width: 92px;
  height: 37px;
  line-height: 35px;
  text-align: center;
  color: #777;
  background: #f0f2f7;
  border: 1.5px solid #8a8a8a;
}
```
